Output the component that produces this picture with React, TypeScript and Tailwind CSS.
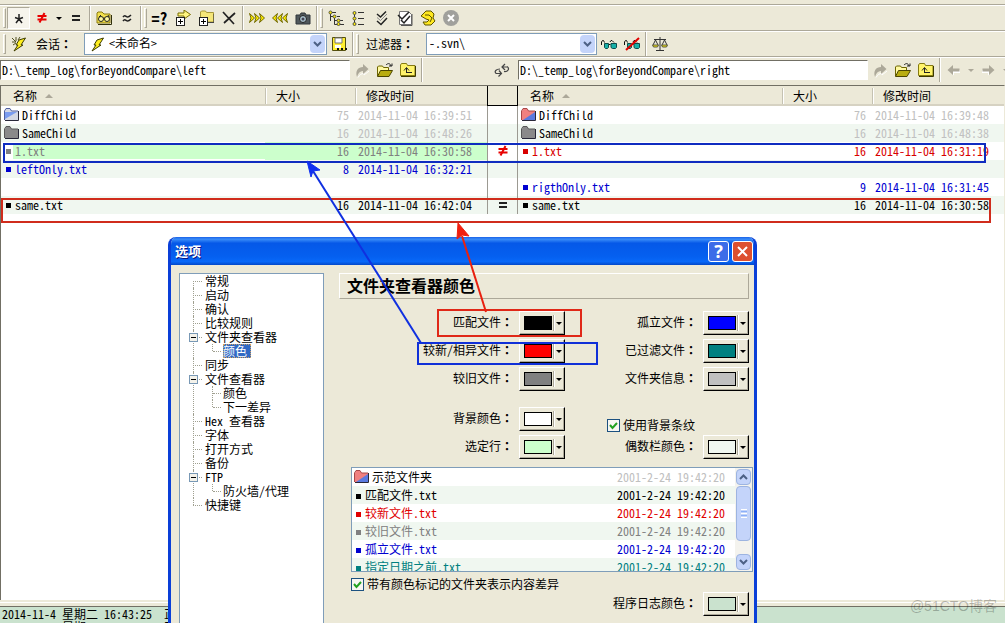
import type { ReactNode } from "react";
import clsx from "clsx";

type TEntry = {
  name: string;
  kind: "folder" | "file";
  size?: string;
  date: string;
  color: string;
  tint?: string;
};

type TRow = {
  left?: TEntry;
  right?: TEntry;
  mark?: "diff" | "same";
  selected?: boolean;
};

const rows: TRow[] = [
  {
    left: { name: "DiffChild", kind: "folder", size: "75", date: "2014-11-04 16:39:51", color: "text-[#c0c0c0]", tint: "blue" },
    right: { name: "DiffChild", kind: "folder", size: "76", date: "2014-11-04 16:39:48", color: "text-[#c0c0c0]", tint: "red" },
  },
  {
    left: { name: "SameChild", kind: "folder", size: "16", date: "2014-11-04 16:48:26", color: "text-[#c0c0c0]", tint: "gray" },
    right: { name: "SameChild", kind: "folder", size: "16", date: "2014-11-04 16:48:38", color: "text-[#c0c0c0]", tint: "gray" },
  },
  {
    left: { name: "1.txt", kind: "file", size: "16", date: "2014-11-04 16:30:58", color: "text-[#808080]" },
    right: { name: "1.txt", kind: "file", size: "16", date: "2014-11-04 16:31:19", color: "text-[#d80000]" },
    mark: "diff",
    selected: true,
  },
  {
    left: { name: "leftOnly.txt", kind: "file", size: "8", date: "2014-11-04 16:32:21", color: "text-[#0000d0]" },
  },
  {
    right: { name: "rigthOnly.txt", kind: "file", size: "9", date: "2014-11-04 16:31:45", color: "text-[#0000d0]" },
  },
  {
    left: { name: "same.txt", kind: "file", size: "16", date: "2014-11-04 16:42:04", color: "text-black" },
    right: { name: "same.txt", kind: "file", size: "16", date: "2014-11-04 16:30:58", color: "text-black" },
    mark: "same",
  },
];

const samples = [
  { name: "示范文件夹", color: "text-[#c0c0c0]", folder: true },
  { name: "匹配文件.txt", color: "text-black" },
  { name: "较新文件.txt", color: "text-[#e00000]" },
  { name: "较旧文件.txt", color: "text-[#808080]" },
  { name: "孤立文件.txt", color: "text-[#0000d0]" },
  { name: "指定日期之前.txt", color: "text-[#008080]" },
];

type TNode = { label: string; children?: string[] };

const tree: TNode[] = [
  { label: "常规" },
  { label: "启动" },
  { label: "确认" },
  { label: "比较规则" },
  { label: "文件夹查看器", children: ["颜色"] },
  { label: "同步" },
  { label: "文件查看器", children: ["颜色", "下一差异"] },
  { label: "Hex 查看器" },
  { label: "字体" },
  { label: "打开方式" },
  { label: "备份" },
  { label: "FTP", children: ["防火墙/代理"] },
  { label: "快捷键" },
];

/* ---------- icons ---------- */

const Icon = ({ children, size = 16 }: { children: ReactNode; size?: number }) => (
  <svg width={size} height={size} viewBox="0 0 16 16" fill="none" className="shrink-0">
    {children}
  </svg>
);

const FolderTint = ({ tint = "gray" }: { tint?: string }) => {
  const base = tint === "gray" ? "#8a8a8a" : tint === "blue" ? "#d4d8e4" : "#f08080";
  const half = tint === "gray" ? "#7c7c7c" : tint === "blue" ? "#7a9cf0" : "#5a7ae0";
  return (
    <svg width="16" height="14" viewBox="0 0 16 14" className="shrink-0">
      <path d="M1 12V3l1-2h4l1.500 2H14v9z" fill={base} />
      {tint === "blue" && <path d="M1 11V4h12z" fill={half} />}
      {tint === "red" && <path d="M2 12L14 4v8z" fill={half} />}
      <path d="M.5 12V3L2 .5h4L7.500 3H14" fill="none" stroke={tint === "red" ? "#a84848" : tint === "blue" ? "#5060a0" : "#585858"} />
      <path d="M1 12.500h13.500V3" fill="none" stroke="#282838" />
    </svg>
  );
};

const Bolt = ({ spark }: { spark?: boolean }) => (
  <Icon>
    <path d="M14.500 2L8 4 5 9h2l-4 6 9-6h-2z" fill="#ffee20" stroke="#3c3c00" strokeWidth="1" />
    {spark && <path d="M1 2l4 4M5 1v4M1 6h4M2 9l3-2M9 1L7 4" stroke="#505020" />}
  </Icon>
);

const NotEqual = () => (
  <Icon>
    <path d="M3.500 6h9M3.500 9.500h9" stroke="#e80000" strokeWidth="2" />
    <path d="M10.500 3L5.500 12.500" stroke="#e80000" strokeWidth="2" />
  </Icon>
);

const Equal = () => (
  <Icon>
    <path d="M4 6h8M4 10h8" stroke="#222" strokeWidth="2" shapeRendering="crispEdges" />
  </Icon>
);

const FolderGlasses = () => (
  <Icon>
    <path d="M1 13V3l1-1h4l2 2h6v9z" fill="#f2e04c" stroke="#8a7a10" />
    <path d="M2 14.500h13.500V5" stroke="#30300c" />
    <circle cx="5" cy="9" r="2.500" fill="#fff9a0" stroke="#222" />
    <circle cx="11" cy="9" r="2.500" fill="#fff9a0" stroke="#222" />
    <path d="M3 7l2-2M13 7l-1-2M7.500 8h1" stroke="#222" />
  </Icon>
);

const PlusBox = () => (
  <>
    <rect x="1.500" y="7.500" width="8" height="8" fill="#fff" stroke="#222" />
    <path d="M5.500 9v5M3 11.500h5" stroke="#000" />
  </>
);

const ArrowPlus = () => (
  <Icon>
    <path d="M3 3h6V0l6.500 4.500L9 9V6H3z" fill="#fff580" stroke="#7a6e00" />
    <PlusBox />
  </Icon>
);

const FolderPlus = () => (
  <Icon>
    <path d="M2.500 11V2l1-1h4l1 1.500h7V12h-6z" fill="#f5e678" stroke="#a89838" />
    <path d="M10 12.500h6V4" stroke="#444" />
    <PlusBox />
  </Icon>
);

const Cross = () => (
  <Icon>
    <path d="M2 2l11 12M14 3L3 13" stroke="#222" strokeWidth="1.700" />
  </Icon>
);

const Chevrons = ({ back }: { back?: boolean }) => (
  <Icon>
    <g transform={back ? "matrix(-1 0 0 1 16 0)" : undefined}>
      {[0, 5, 10].map((x) => (
        <path key={x} d={`M${x + 0.5} 3.500l5 4.500-5 4.500 1.500-4.500z`} fill="#ffee00" stroke="#6e6600" />
      ))}
    </g>
  </Icon>
);

const Camera = () => (
  <Icon>
    <path d="M1 5h4l1-2h4l1 2h4v9H1z" fill="#50585c" stroke="#30363a" />
    <circle cx="8" cy="9" r="3.500" fill="#a8c0cc" stroke="#222" />
    <circle cx="8" cy="9" r="1.500" fill="#445" />
  </Icon>
);

const TreeIcon = () => (
  <Icon>
    <path d="M2.500 2v9M2.500 6.500h3M6.500 8v6.500h3M6.500 10.500h3M4 2.500h4M9 6.500h3M12 14.500h4M12 10.500h3" stroke="#333" />
    <circle cx="2.500" cy="2.500" r="1.500" fill="#ffee00" stroke="#554" />
    <circle cx="6.500" cy="6.500" r="1.500" fill="#ffee00" stroke="#554" />
    <circle cx="10.500" cy="10.500" r="1.500" fill="#ffee00" stroke="#554" />
    <circle cx="10.500" cy="14" r="1.500" fill="#ffee00" stroke="#554" />
  </Icon>
);

const ListIcon = () => (
  <Icon>
    <path d="M3.500 2v13M7 2.500h6M7 8.500h6M7 14.500h6" stroke="#333" />
    <circle cx="3.500" cy="3" r="1.500" fill="#ffee00" stroke="#554" />
    <circle cx="3.500" cy="8.500" r="1.500" fill="#ffee00" stroke="#554" />
    <circle cx="3.500" cy="14" r="1.500" fill="#ffee00" stroke="#554" />
  </Icon>
);

const DoubleCheck = () => (
  <Icon>
    <path d="M3 4l3.500 3L12 1.500M3 11l4 3.500L13 8" stroke="#222" strokeWidth="1.500" />
    <path d="M3 7.500l3.500 3L13 4" stroke="#888" />
  </Icon>
);

const DocCheck = () => (
  <Icon>
    <path d="M2.500 1.500h9l3 3v10h-12z" fill="#fff" stroke="#777" />
    <path d="M15 4v11.500H4" stroke="#555" />
    <path d="M1 5l4 4 7-7M4 10l3 3 6-7" stroke="#222" strokeWidth="1.500" />
  </Icon>
);

const Refresh = () => (
  <Icon>
    <path d="M6 1h5l3 3-1 4 2 3-4 4H5l-2-3h4l2-2-3-1-5-3z" fill="#ffe820" stroke="#5c5400" />
    <path d="M5 5h4l3 3-2 4" stroke="#5c5400" />
  </Icon>
);

const Stop = () => (
  <Icon>
    <circle cx="8" cy="8" r="8" fill="#a0a09c" />
    <path d="M5 5l6 6M11 5l-6 6" stroke="#fff" strokeWidth="2" />
  </Icon>
);

const Save = () => (
  <Icon>
    <path d="M1.500 1.500h13v13h-13z" fill="#ffee30" stroke="#555010" />
    <path d="M4 2h7v5H4z" fill="#fff" stroke="#777" />
    <path d="M4 9h6v3H4z" fill="#fff" />
    <path d="M6 12h2v2H6zM10 12h2v2h-2zM14 12h2v2h-2z" fill="#111" />
  </Icon>
);

const Glasses = ({ off }: { off?: boolean }) => (
  <Icon>
    <path d="M.5 9V6l1-1.500h1l1 2M7.500 8.500h2M9 6l1-1.500h1l2 2" stroke="#111" />
    <path d="M3.500 7.500h4v4l-1 1h-2l-1-1zM10 7.500h5.500v4l-1 1h-3L10 11.500z" fill="#18b0a8" stroke="#0c4c4c" />
    {off && <path d="M2 14L15 2" stroke="#e00000" strokeWidth="2" />}
  </Icon>
);

const Scales = () => (
  <Icon>
    <path d="M8 1v13M2 3.500h12M4 14.500h8M3.500 4L1 9M3.500 4L6 9M12.500 4L10 9M12.500 4L15 9" stroke="#333" />
    <path d="M.5 9h6l-1 2h-4zM9.500 9h6l-1 2h-4z" fill="#ffee00" stroke="#554" />
  </Icon>
);

const Go = () => (
  <Icon>
    <path d="M4 15.500c2-3 3-4 6-4V13l5-4" stroke="#fff" />
    <path d="M3 15C1 9 4 5 9 5V2l5.500 5L9 12V9c-3 0-5 2-6 6z" fill="#aca899" />
  </Icon>
);

const OpenFolder = () => (
  <Icon>
    <path d="M.5 14V5l1-1h4l1 1.500h5V8" fill="#fff9a0" stroke="#6c6400" />
    <path d="M.5 14.500l3-6h12l-3.500 6z" fill="#b8ac10" stroke="#4c4600" />
    <path d="M9 3c2-2 4-2 5 1M12 4h3V1.500" stroke="#222" />
  </Icon>
);

const UpFolder = () => (
  <Icon>
    <path d="M.5 13.500V3l1-1.500h5l1 2h7.500v10z" fill="#fff36a" stroke="#857a10" />
    <path d="M1 14.500h14.500V4" stroke="#3c3800" />
    <path d="M6.500 11V6M4 8.500l2.500-3L9 8.500M6 10.500h6" stroke="#222" />
  </Icon>
);

const Swap = () => (
  <Icon>
    <path d="M2 11.500c-2-2 0-4.500 4-4.500M2 11.500h5M5 8.500l2.500 3-3 3M13 4.500c3 2 1 5.500-3 5M13.500 5H8.500M11 2L8 5l3 3" stroke="#444" strokeWidth="1.200" />
  </Icon>
);

const NavArrow = ({ next }: { next?: boolean }) => (
  <Icon>
    <g transform={next ? "matrix(-1 0 0 1 16 0)" : undefined}>
      <path d="M3 9l5 4.500V11h6V8" fill="#fff" />
      <path d="M1.500 8L7 3v3.500h6.500v3H7V13z" fill="#aca899" />
    </g>
  </Icon>
);

const Caret = ({ color = "#000" }: { color?: string }) => (
  <svg width="6" height="3" viewBox="0 0 6 3" className="shrink-0">
    <path d="M0 0h6L3 3z" fill={color} />
  </svg>
);

/* ---------- small controls ---------- */

/* the TC face centres the full-width colon in its cell */
const Colon = () => <span className="font-['Noto_Sans_CJK_TC',sans-serif] font-bold">：</span>;

const Sep = () => <span className="ml-[2px] mr-px h-full w-[2px] shrink-0 border-l border-r border-l-[#aca899] border-r-white" />;

const Grip = () => <span className="mx-px h-5 w-[3px] shrink-0 border border-b-[#aca899] border-l-white border-r-[#aca899] border-t-white" />;

const ToolButton = ({ label, children, pressed, narrow }: { label: string; children: ReactNode; pressed?: boolean; narrow?: boolean }) => (
  <button
    type="button"
    aria-label={label}
    className={clsx(
      "flex h-[22px] shrink-0 items-center justify-center",
      narrow ? "w-[11px]" : "w-[23px]",
      pressed && "border border-b-white border-l-[#aca899] border-r-white border-t-[#aca899] bg-[#f6f4ec]"
    )}
  >
    {children}
  </button>
);

const DropArrow = () => (
  <span className="pointer-events-none flex h-[18px] w-[15px] shrink-0 items-center justify-center rounded-sm bg-[#c4d4fa]">
    <svg width="9" height="6" viewBox="0 0 9 6">
      <path d="M1 1l3.500 3.500L8 1" fill="none" stroke="#4d6185" strokeWidth="2" />
    </svg>
  </span>
);

const Combo = ({ id, value, icon, className }: { id: string; value: string; icon?: ReactNode; className: string }) => (
  <div className={clsx("flex h-[22px] shrink-0 items-center border border-[#7f9db9] bg-white pr-px", className)}>
    {icon}
    <select id={id} className={clsx("min-w-0 flex-1 appearance-none bg-white pb-[2px] outline-none", icon ? "pl-1" : "pl-[2px]")}>
      <option>{value}</option>
    </select>
    <DropArrow />
  </div>
);

const PathInput = ({ label, value }: { label: string; value: string }) => (
  <input
    aria-label={label}
    defaultValue={value}
    className="h-5 min-w-0 flex-1 border border-b-white border-l-[#716f64] border-r-white border-t-[#716f64] bg-white pb-[2px] pl-px outline-none"
  />
);

const ColorField = ({ label, swatch, className }: { label: string; swatch: string; className?: string }) => (
  <div className={clsx("flex h-6 items-center justify-end gap-[6px]", className)}>
    <span className="pb-[2px]">
      {label}
      <Colon />
    </span>
    <button
      type="button"
      aria-label={label}
      className="flex h-6 w-[46px] items-center border border-b-black border-l-white border-r-black border-t-white pl-1 shadow-[inset_-1px_-1px_0_#aca899]"
    >
      <span className={clsx("h-[14px] w-7 border border-black", swatch)} />
      <span className="mx-px h-4 w-[2px] border-l border-r border-l-[#aca899] border-r-white" />
      <Caret />
    </button>
  </div>
);

const CheckField = ({ id, label, className }: { id: string; label: string; className?: string }) => (
  <div className={clsx("flex items-center gap-[3px]", className)}>
    <span className="relative flex size-[13px]">
      <input id={id} type="checkbox" defaultChecked className="size-[13px] appearance-none border border-[#1c5180] bg-[#f6f6f2]" />
      <svg width="13" height="13" viewBox="0 0 13 13" className="pointer-events-none absolute inset-0">
        <path d="M3 6l2.500 3L10 4" fill="none" stroke="#21a121" strokeWidth="2" />
      </svg>
    </span>
    <label htmlFor={id}>{label}</label>
  </div>
);

/* ---------- folder comparison ---------- */

const EntryCells = ({ entry, selected }: { entry?: TEntry; selected?: boolean }) => {
  if (!entry) return <td colSpan={3} />;
  const { name, kind, size, date, color, tint } = entry;
  const fill = selected && "bg-[#ccffcc]";

  return (
    <>
      <td className="p-0">
        {kind === "folder" ? (
          <div className="flex items-center gap-[2px] pl-[3px]">
            <FolderTint tint={tint} />
            {name}
          </div>
        ) : (
          <div className={clsx("flex h-[18px] items-center pl-[5px]", color)}>
            <span className="size-[5px] bg-current" />
            <span className={clsx("ml-[2px] flex-1 pl-[2px]", fill)}>{name}</span>
          </div>
        )}
      </td>
      <td className={clsx("p-0 pr-[6px] text-right", color, fill)}>{size}</td>
      <td className={clsx("p-0 pl-[3px]", color, fill)}>{date}</td>
    </>
  );
};

const HeaderCells = () => (
  <>
    <th className="p-0 pl-3 text-left font-normal">
      <span className="flex items-center gap-2">
        名称
        <svg width="8" height="4" viewBox="0 0 8 4">
          <path d="M0 4h8L4 0z" fill="#aca899" />
        </svg>
      </span>
    </th>
    <th className="p-0 text-left font-normal">
      <span className="block border-l border-[#c5c2b2] pl-[10px] shadow-[inset_1px_0_0_#fff]">大小</span>
    </th>
    <th className="p-0 text-left font-normal">
      <span className="block border-l border-[#c5c2b2] pl-[10px] shadow-[inset_1px_0_0_#fff]">修改时间</span>
    </th>
  </>
);

const CompareTable = () => (
  <table className="w-full table-fixed border-collapse">
    <colgroup>
      <col />
      <col className="w-[90px]" />
      <col className="w-[132px]" />
      <col className="w-[31px]" />
      <col />
      <col className="w-[90px]" />
      <col className="w-[132px]" />
    </colgroup>
    <thead>
      <tr className="h-5 bg-[#ece9d8] shadow-[inset_0_-2px_0_#d6d2c2]">
        <HeaderCells />
        <th className="p-0" aria-label="比较">
          <div className="h-5 border border-t-0 border-black bg-[#ece9d8]" />
        </th>
        <HeaderCells />
      </tr>
    </thead>
    <tbody>
      {rows.map((row, i) => (
        <tr key={i} className="h-[18px] even:bg-[#f0f7f0]">
          <EntryCells entry={row.left} selected={row.selected} />
          <td className="p-0">
            <div className="flex h-[18px] items-center justify-center border-x border-[#9c9a92]">
              {row.mark === "diff" && <NotEqual />}
              {row.mark === "same" && <Equal />}
            </div>
          </td>
          <EntryCells entry={row.right} />
        </tr>
      ))}
    </tbody>
  </table>
);

/* ---------- options dialog ---------- */

const SectionTree = () => (
  <nav className="w-[145px] shrink-0 border border-b-0 border-[#7f9db9] bg-white">
    <ul className="ml-[13px]">
      {tree.map(({ label, children }, i) => (
        <li key={label} className="relative">
          <span className={clsx("absolute left-0 border-l border-dotted border-[#a0a090]", i === 0 ? "top-[7px] bottom-0" : i === tree.length - 1 ? "top-0 h-[7px]" : "inset-y-0")} />
          <div className="flex h-[14px] items-center">
            <span className="mr-[3px] w-[9px] border-t border-dotted border-[#a0a090]" />
            {children && (
              <button type="button" aria-label={label} className="absolute -left-1 top-[3px] flex size-[9px] items-center justify-center border border-[#7898b5] bg-[#f4f2ea]">
                <span className="h-px w-[5px] bg-black" />
              </button>
            )}
            <a href="#section" className="whitespace-nowrap leading-[14px]">{label}</a>
          </div>
          {children?.map((child, n) => (
            <div key={child} className="ml-[19px] flex h-[14px] items-center">
              <span className={clsx("self-start border-l border-dotted border-[#a0a090]", n === children.length - 1 ? "h-[7px]" : "h-[14px]")} />
              <span className="mr-[2px] w-2 border-t border-dotted border-[#a0a090]" />
              <a
                href="#section"
                className={clsx("whitespace-nowrap leading-[14px]", i === 4 && "bg-[#316ac5] pr-1 text-white outline-1 -outline-offset-1 outline-dotted outline-[#d0a060]")}
              >
                {child}
              </a>
            </div>
          ))}
        </li>
      ))}
    </ul>
  </nav>
);

const ScrollBar = () => (
  <div className="flex w-[17px] shrink-0 flex-col items-center bg-[#f4f3ee] py-px">
    <button type="button" aria-label="向上" className="flex h-4 w-[15px] items-center justify-center rounded-sm border border-[#9db4e0] bg-[#c4d4fa]">
      <svg width="9" height="6" viewBox="0 0 9 6">
        <path d="M1 5l3.500-3.500L8 5" fill="none" stroke="#4d6185" strokeWidth="2" />
      </svg>
    </button>
    <span className="mt-px flex h-[55px] w-[15px] flex-col items-center justify-center gap-px rounded-sm border border-[#9db4e0] bg-[#c4d4fa]">
      <span className="h-px w-[6px] bg-white" />
      <span className="h-px w-[6px] bg-[#8cb0f8]" />
      <span className="h-px w-[6px] bg-white" />
      <span className="h-px w-[6px] bg-[#8cb0f8]" />
      <span className="h-px w-[6px] bg-white" />
    </span>
    <button type="button" aria-label="向下" className="mt-auto flex h-4 w-[15px] items-center justify-center rounded-sm border border-[#9db4e0] bg-[#c4d4fa]">
      <svg width="9" height="6" viewBox="0 0 9 6">
        <path d="M1 1l3.500 3.500L8 1" fill="none" stroke="#4d6185" strokeWidth="2" />
      </svg>
    </button>
  </div>
);

const SampleList = () => (
  <div className="flex h-[105px] overflow-hidden border border-[#7f9db9] bg-white">
    <div className="flex-1">
      <table className="w-full border-collapse">
        <tbody>
          {samples.map(({ name, color, folder }) => (
            <tr key={name} className="h-[18px] even:bg-[#f0f7f0]">
              <td className="p-0 pb-px">
                {folder ? (
                  <span className="flex items-center gap-[2px] pl-[2px]">
                    <FolderTint tint="red" />
                    {name}
                  </span>
                ) : (
                  <span className={clsx("flex items-center gap-1 pl-1", color)}>
                    <span className="mt-1 size-[5px] bg-current" />
                    {name}
                  </span>
                )}
              </td>
              <td className={clsx("p-0 pb-px pr-[10px] text-right", color)}>2001-2-24 19:42:20</td>
            </tr>
          ))}
        </tbody>
      </table>
    </div>
    <ScrollBar />
  </div>
);

const OptionsDialog = () => (
  <section
    role="dialog"
    aria-label="选项"
    className="absolute bottom-0 left-[168px] top-[237px] flex w-[589px] flex-col overflow-hidden rounded-t-lg border-x-[3px] border-[#0a3fd8] bg-[#ece9d8]"
  >
    <header className="-mx-[3px] flex h-7 shrink-0 items-center gap-[3px] bg-[linear-gradient(180deg,#1a62e8_0%,#3a8cf8_8%,#0558e8_22%,#0560f0_70%,#0868f8_88%,#0348c8_100%)] pl-[7px] pr-1 font-bold text-white">
      <h1 className="flex-1 text-[13px] [text-shadow:1px_1px_#0a1883]">选项</h1>
      <button type="button" aria-label="帮助" className="size-[21px] rounded-[3px] border border-white bg-[#3c6ce8] font-sans text-lg leading-[18px]">
        ?
      </button>
      <button type="button" aria-label="关闭" className="flex size-[21px] items-center justify-center rounded-[3px] border border-white bg-[#dd5030]">
        <svg width="13" height="13" viewBox="0 0 13 13">
          <path d="M2 2l9 9M11 2l-9 9" stroke="#fff" strokeWidth="2" />
        </svg>
      </button>
    </header>
    <div className="flex min-h-0 flex-1 pl-2 pt-2">
      <SectionTree />
      <div className="min-w-0 flex-1 pl-[15px] pr-[5px]">
        <h2 className="h-[26px] border border-b-[#aca899] border-l-white border-r-[#aca899] border-t-white pl-[7px] text-base font-bold leading-[22px]">
          文件夹查看器颜色
        </h2>
        <div className="mt-3 grid grid-cols-[226px_1fr] gap-y-1">
          <ColorField label="匹配文件" swatch="bg-black" />
          <ColorField label="孤立文件" swatch="bg-[#0000ff]" />
          <ColorField label="较新/相异文件" swatch="bg-[#ff0000]" />
          <ColorField label="已过滤文件" swatch="bg-[#008080]" />
          <ColorField label="较旧文件" swatch="bg-[#808080]" />
          <ColorField label="文件夹信息" swatch="bg-[#c0c0c0]" />
          <ColorField label="背景颜色" swatch="bg-white" className="mt-3" />
          <CheckField id="stripes" label="使用背景条纹" className="h-3 self-end pl-[42px]" />
          <ColorField label="选定行" swatch="bg-[#ccffcc]" />
          <ColorField label="偶数栏颜色" swatch="bg-[#f0f7f0]" />
        </div>
        <div className="-mr-1 ml-3 mt-2">
          <SampleList />
        </div>
        <CheckField id="mark" label="带有颜色标记的文件夹表示内容差异" className="ml-3 mt-1 h-4" />
        <ColorField label="程序日志颜色" swatch="bg-[#cae2ce]" />
      </div>
    </div>
  </section>
);

/* boxes and arrows drawn over the window */
const Annotations = () => (
  <svg width="1005" height="623" viewBox="0 0 1005 623" fill="none" className="pointer-events-none absolute left-0 top-0">
    <path d="M4 144H985V162H4z" stroke="#0f2cc0" strokeWidth="2" />
    <path d="M2 199H990V222H2z" stroke="#d02c1c" strokeWidth="2" />
    <path d="M438 310H581V336H438z" stroke="#e02818" strokeWidth="2" />
    <path d="M418 343H597V364H418z" stroke="#1030d8" strokeWidth="2" />
    <path d="M421 343L313 171" stroke="#1030e0" strokeWidth="2" />
    <path d="M307 161L320 170 313 171 311 177z" fill="#1030f0" stroke="#1030f0" />
    <path d="M486 312L462 236" stroke="#e82010" strokeWidth="2" />
    <path d="M458 223L469 236 462 235 457 239z" fill="#f02010" stroke="#f02010" />
  </svg>
);

const App = () => {
  return (
    <div className="relative flex h-screen flex-col overflow-hidden bg-[#ece9d8] font-['Noto_Sans_Mono_CJK_SC','Liberation_Mono','Noto_Sans_CJK_SC',monospace] text-xs text-black">
      <div className="h-[5px] shrink-0 border-b border-[#aca899]" />

      <div className="flex h-[26px] shrink-0 items-center border-b border-t border-b-[#aca899] border-t-white pl-[2px]">
        <Grip />
        <ToolButton label="全部显示" pressed>
          <Icon>
            <path d="M8 4v5M4 7.500l4 1.500 4-1.500M5 13L8 9l3 4" stroke="#222" strokeWidth="1.500" />
          </Icon>
        </ToolButton>
        <ToolButton label="显示差异">
          <NotEqual />
        </ToolButton>
        <ToolButton label="差异选项" narrow>
          <Caret />
        </ToolButton>
        <ToolButton label="显示相同">
          <Equal />
        </ToolButton>
        <Sep />
        <ToolButton label="查看文件夹">
          <FolderGlasses />
        </ToolButton>
        <ToolButton label="近似">
          <Icon>
            <path d="M4 7c2-3 3 0 4.500 0s2.500-1 3.500-2M4 11c2-3 3 0 4.500 0s2.500-1 3.500-2" stroke="#222" strokeWidth="1.500" />
          </Icon>
        </ToolButton>
        <Sep />
        <Grip />
        <ToolButton label="比较内容">
          <span className="text-base font-bold leading-none">=?</span>
        </ToolButton>
        <ToolButton label="复制到">
          <ArrowPlus />
        </ToolButton>
        <ToolButton label="复制到文件夹">
          <FolderPlus />
        </ToolButton>
        <ToolButton label="删除">
          <Cross />
        </ToolButton>
        <Sep />
        <ToolButton label="向右同步">
          <Chevrons />
        </ToolButton>
        <ToolButton label="向左同步">
          <Chevrons back />
        </ToolButton>
        <ToolButton label="快照">
          <Camera />
        </ToolButton>
        <Sep />
        <Grip />
        <ToolButton label="展开全部">
          <TreeIcon />
        </ToolButton>
        <ToolButton label="折叠全部">
          <ListIcon />
        </ToolButton>
        <ToolButton label="全选">
          <DoubleCheck />
        </ToolButton>
        <ToolButton label="选择文件">
          <DocCheck />
        </ToolButton>
        <ToolButton label="刷新">
          <Refresh />
        </ToolButton>
        <ToolButton label="停止">
          <Stop />
        </ToolButton>
      </div>

      <div className="flex h-[26px] shrink-0 items-center border-b border-t border-b-[#aca899] border-t-white pl-[2px]">
        <Grip />
        <ToolButton label="新会话">
          <Bolt spark />
        </ToolButton>
        <label htmlFor="session" className="w-[54px] pl-[6px]">
          会话
          <Colon />
        </label>
        <Combo id="session" value="<未命名>" icon={<span className="pl-1"><Bolt /></span>} className="w-[243px]" />
        <ToolButton label="保存会话">
          <Save />
        </ToolButton>
        <Sep />
        <Grip />
        <label htmlFor="filter" className="w-[66px] pl-[6px]">
          过滤器
          <Colon />
        </label>
        <Combo id="filter" value="-.svn\" className="w-[171px]" />
        <ToolButton label="应用过滤器">
          <Glasses />
        </ToolButton>
        <ToolButton label="取消过滤器">
          <Glasses off />
        </ToolButton>
        <Sep />
        <ToolButton label="规则">
          <Scales />
        </ToolButton>
      </div>

      <div className="flex h-7 shrink-0 items-center border-t border-white pb-[3px]">
        <PathInput label="左侧路径" value="D:\_temp_log\forBeyondCompare\left" />
        <ToolButton label="转到">
          <Go />
        </ToolButton>
        <ToolButton label="打开">
          <OpenFolder />
        </ToolButton>
        <ToolButton label="上级文件夹">
          <UpFolder />
        </ToolButton>
        <Sep />
        <span className="w-[66px]" />
        <ToolButton label="交换两侧">
          <Swap />
        </ToolButton>
        <span className="w-[5px]" />
        <PathInput label="右侧路径" value="D:\_temp_log\forBeyondCompare\right" />
        <ToolButton label="转到">
          <Go />
        </ToolButton>
        <ToolButton label="打开">
          <OpenFolder />
        </ToolButton>
        <ToolButton label="上级文件夹">
          <UpFolder />
        </ToolButton>
        <Sep />
        <ToolButton label="后退">
          <NavArrow />
        </ToolButton>
        <ToolButton label="后退历史" narrow>
          <Caret color="#aca899" />
        </ToolButton>
        <ToolButton label="前进">
          <NavArrow next />
        </ToolButton>
        <span className="flex w-[6px] overflow-hidden pl-1">
          <Caret color="#aca899" />
        </span>
      </div>

      <main className="min-h-0 flex-1 overflow-hidden border-l border-r border-t border-l-[#716f64] border-r-[#ece9d8] border-t-[#716f64] bg-white">
        <CompareTable />
      </main>

      <div className="h-[6px] shrink-0 pt-[2px]">
        <div className="h-px bg-white" />
      </div>
      <footer className="h-[17px] shrink-0 overflow-hidden border-t border-[#716f64] bg-[#cae2ce] pl-[2px] leading-[13px]">
        <p>2014-11-4 星期二 16:43:25&nbsp;&nbsp;正在比较</p>
        <p>2014-11-4 星期二 16:47:59&nbsp;&nbsp;正在比较</p>
      </footer>

      <OptionsDialog />
      <Annotations />
      <span className="absolute bottom-[7px] right-2 font-['Liberation_Sans','Noto_Sans_CJK_SC',sans-serif] text-sm text-black/25">@51CTO博客</span>
    </div>
  );
};

export default App;
